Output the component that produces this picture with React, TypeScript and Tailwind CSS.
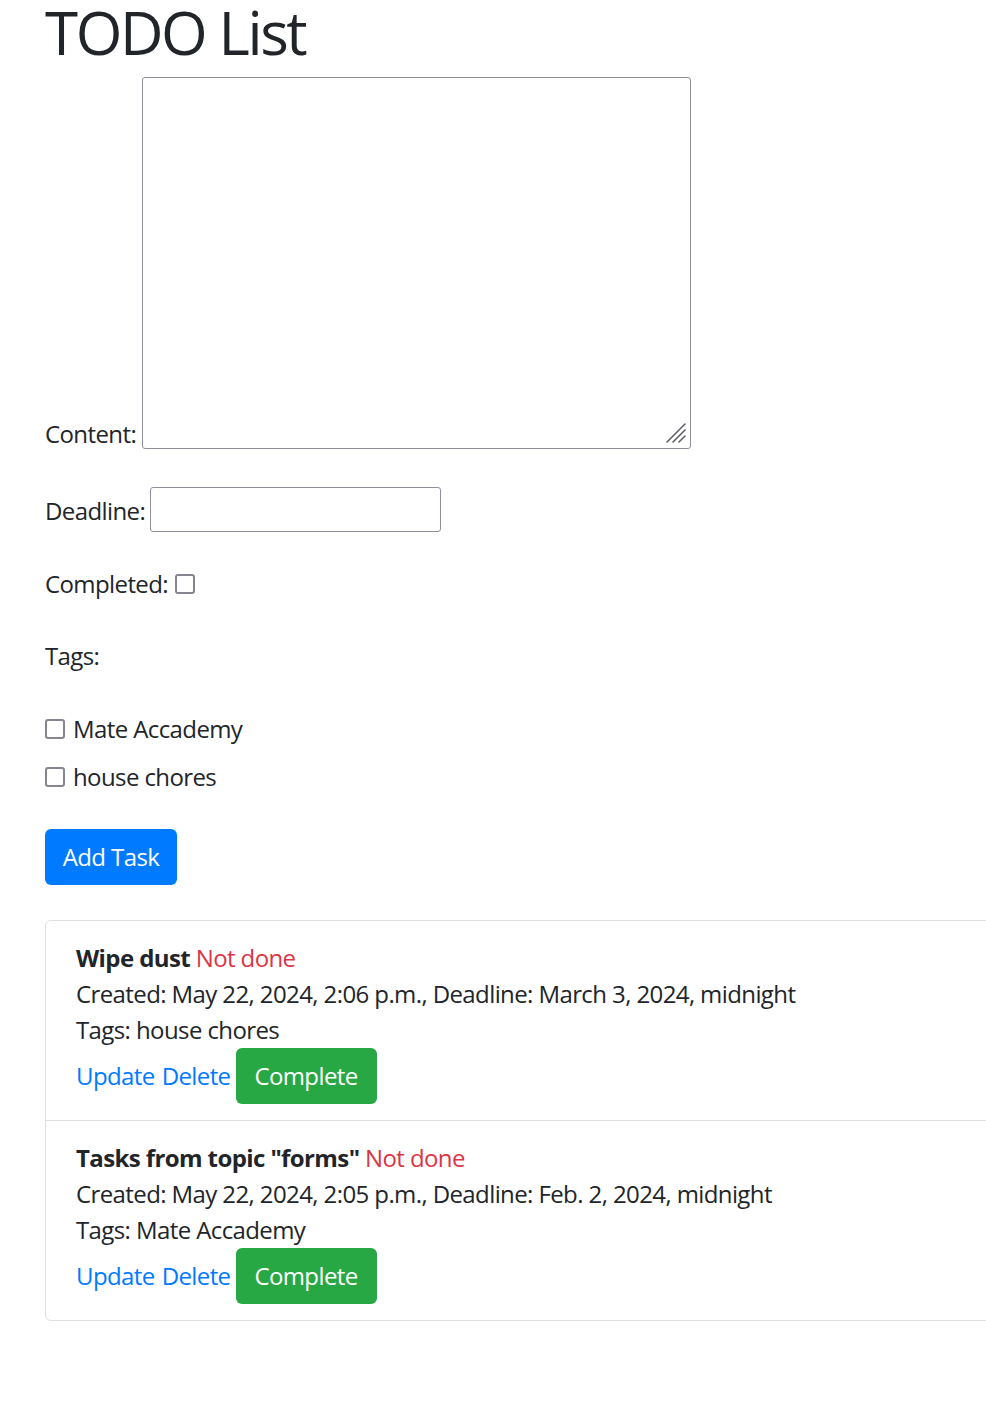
const tasks = [
  {
    title: "Wipe dust",
    created: "May 22, 2024, 2:06 p.m.",
    deadline: "March 3, 2024, midnight",
    tags: "house chores",
  },
  {
    title: 'Tasks from topic "forms"',
    created: "May 22, 2024, 2:05 p.m.",
    deadline: "Feb. 2, 2024, midnight",
    tags: "Mate Accademy",
  },
]

// plain box that looks like the zoomed native checkbox
const Checkbox = () => (
  <span
    role="checkbox"
    aria-checked="false"
    className="inline-block w-[20px] h-[20px] border-[2.5px] border-[#85858f] rounded-[3px] bg-white shrink-0"
  />
)

const App = () => {
  return (
    <div className="w-full min-h-screen overflow-hidden bg-white text-[#212529] font-['Open_Sans',sans-serif] text-[24px] leading-[36px] tracking-[-0.025em]">
      <div className="pl-[45px]">
        <h1 className="text-[60px] leading-[64px] font-normal tracking-[-0.04em] mb-[13px]">TODO List</h1>

        <form onSubmit={(e) => e.preventDefault()}>
          <div className="flex items-end">
            <label className="mb-[-3px]">Content:</label>
            <div className="relative ml-[6px]">
              <textarea className="block w-[549px] h-[372px] border border-[#8f8f9d] rounded-[3px] bg-white resize-none" />
              <svg
                className="absolute right-[4px] bottom-[5px]"
                width="22"
                height="22"
                viewBox="0 0 22 22"
              >
                <g stroke="#5f5f66" strokeWidth="1.6" strokeLinecap="round">
                  <line x1="2" y1="20" x2="20" y2="2" />
                  <line x1="8" y1="20" x2="20" y2="8" />
                  <line x1="14" y1="20" x2="20" y2="14" />
                </g>
              </svg>
            </div>
          </div>

          <div className="flex items-center mt-[38px]">
            <label className="mt-[3px]">Deadline:</label>
            <input
              type="text"
              className="ml-[5px] w-[291px] h-[45px] border border-[#8f8f9d] rounded-[3px] bg-white"
            />
          </div>

          <div className="flex items-center gap-[7px] mt-[34px] h-[36px]">
            <label>Completed:</label>
            <Checkbox />
          </div>

          <div className="mt-[36px] h-[36px]">Tags:</div>

          <div className="flex items-center gap-[8px] mt-[37px] h-[36px]">
            <Checkbox />
            <span>Mate Accademy</span>
          </div>
          <div className="flex items-center gap-[8px] mt-[12px] h-[36px]">
            <Checkbox />
            <span>house chores</span>
          </div>

          <button
            type="submit"
            className="mt-[34px] w-[132px] h-[56px] rounded-[6px] bg-[#007bff] text-white text-center"
          >
            Add Task
          </button>
        </form>

        <ul className="mt-[35px] w-[1100px] border border-[#dfdfdf] rounded-[6px] divide-y divide-[#dfdfdf]">
          {tasks.map((t) => (
            <li key={t.title} className="px-[30px] pt-[19px] pb-[16px]">
              <div>
                <strong className="font-bold">{t.title}</strong>{" "}
                <span className="text-[#dc3545]">Not done</span>
              </div>
              <div>
                Created: {t.created}, Deadline: {t.deadline}
              </div>
              <div>Tags: {t.tags}</div>
              <div className="flex items-baseline">
                <a href="#" className="text-[#007bff]">Update</a>
                <a href="#" className="ml-[7px] text-[#007bff]">Delete</a>
                <button className="ml-[5px] w-[141px] h-[56px] rounded-[6px] bg-[#28a745] text-white">
                  Complete
                </button>
              </div>
            </li>
          ))}
        </ul>
      </div>
    </div>
  )
}

export default App
